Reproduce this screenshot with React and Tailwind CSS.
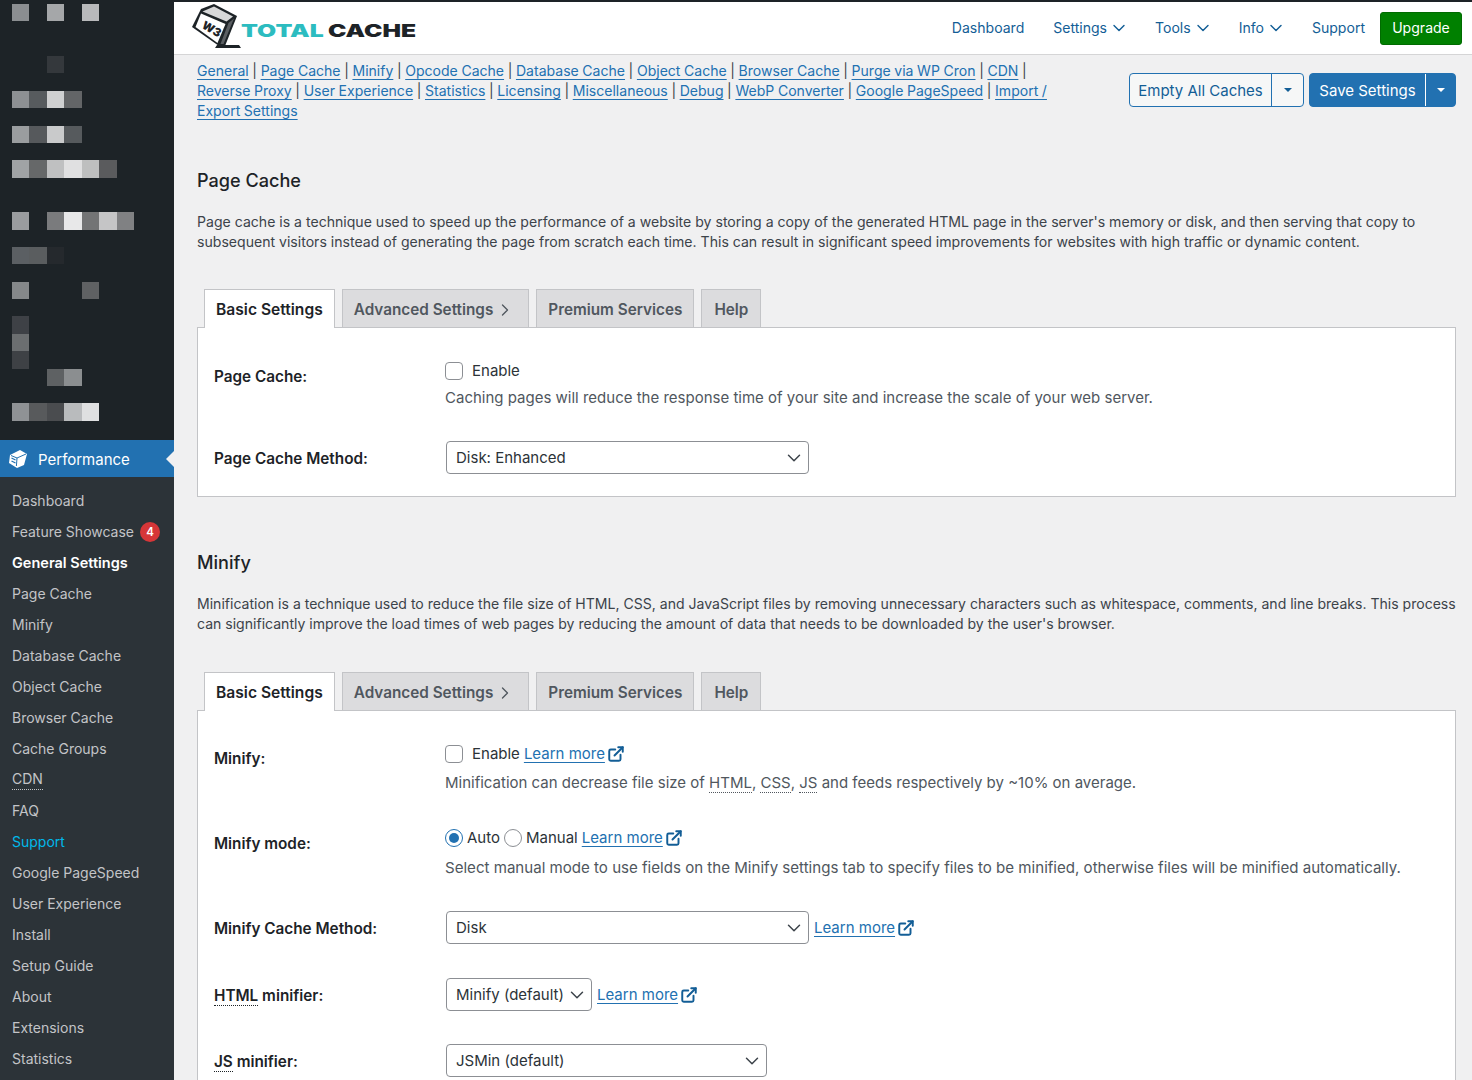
import React from "react";
import { ChevronDown, ChevronRight, ExternalLink } from "lucide-react";

const mosaic = [
  [0, [["#8b8e91", 0], ["#a5a7a9", 2], ["#b8b9bb", 4]]],
  [3, [["#34383c", 2]]],
  [5, [["#8d9093", 0], ["#575b5e", 1], ["#cfd0d1", 2], ["#636567", 3]]],
  [7, [["#9a9d9f", 0], ["#56595c", 1], ["#c9cacb", 2], ["#565a5d", 3]]],
  [9, [["#a0a3a5", 0], ["#666869", 1], ["#bfc0c1", 2], ["#e0e0e1", 3], ["#bebfbf", 4], ["#5a5b5d", 5]]],
  [12, [["#9a9c9f", 0], ["#7a7b7d", 2], ["#e8e8e9", 3], ["#737475", 4], ["#c5c5c6", 5], ["#808183", 6]]],
  [14, [["#5b5f63", 0], ["#5a5d5f", 1], ["#25292d", 2]]],
  [16, [["#85888a", 0], ["#5f6163", 4]]],
  [18, [["#3e4146", 0]]],
  [19, [["#6b6e70", 0]]],
  [20, [["#3e4145", 0]]],
  [21, [["#5e6163", 2], ["#8b8e90", 3]]],
  [23, [["#8f9295", 0], ["#585a5c", 1], ["#4a4c4f", 2], ["#b9bbbd", 3], ["#dfe0e1", 4]]],
];

const subItems = ["Dashboard", "Feature Showcase", "General Settings", "Page Cache", "Minify", "Database Cache", "Object Cache", "Browser Cache", "Cache Groups", "CDN", "FAQ", "Support", "Google PageSpeed", "User Experience", "Install", "Setup Guide", "About", "Extensions", "Statistics"];

const links = ["General", "Page Cache", "Minify", "Opcode Cache", "Database Cache", "Object Cache", "Browser Cache", "Purge via WP Cron", "CDN", "Reverse Proxy", "User Experience", "Statistics", "Licensing", "Miscellaneous", "Debug", "WebP Converter", "Google PageSpeed"];

function Link({ children }) {
  return <a className="text-[#2271b1] underline underline-offset-[3px] decoration-1">{children}</a>;
}

function Abbr({ children }) {
  return <span className="border-b border-dotted border-current">{children}</span>;
}

function Learn() {
  return (
    <span className="inline-flex items-center gap-[2px]">
      <Link>Learn more</Link>
      <ExternalLink size={18} strokeWidth={2.6} className="text-[#135e96]" />
    </span>
  );
}

function Select({ w, children }) {
  return (
    <div className={`${w} ml-[1px] h-[33px] flex items-center justify-between pl-[9px] pr-[3px] bg-white border border-[#8c8f94] rounded-[4px] text-[#2c3338] text-[15px] whitespace-nowrap`}>
      <span className="pt-[1px]">{children}</span>
      <ChevronDown size={22} strokeWidth={1.6} className="text-[#3c434a] shrink-0" />
    </div>
  );
}

function Check() {
  return <span className="inline-block w-[18px] h-[18px] rounded-[4px] border border-[#8c8f94] bg-white" />;
}

function Tabs() {
  const tab = "h-[38px] flex items-center pt-[2px] border border-b-0 border-[#c3c4c7] bg-[#dcdcde] text-[#50575e] font-semibold text-[15.3px]";
  return (
    <div className="flex pl-[7px] gap-[7px] h-[38px] relative z-10">
      <div className="h-[39px] flex items-center pt-[2px] px-[11px] border border-b-0 border-[#c3c4c7] bg-white text-[#1d2327] font-semibold text-[15.6px]">Basic Settings</div>
      <div className={`${tab} gap-[2px] pl-[11px] pr-[13px]`}>Advanced Settings <ChevronRight size={20} strokeWidth={1.6} /></div>
      <div className={`${tab} px-[11px]`}>Premium Services</div>
      <div className={`${tab} w-[60px] justify-center`}>Help</div>
    </div>
  );
}

function Row({ label, labelTop, top, children }) {
  return (
    <div className={`flex ${top}`}>
      <div className={`w-[231px] shrink-0 font-semibold text-[#1d2327] text-[15.3px] leading-5 ${labelTop}`}>{label}</div>
      <div className="flex-1 min-w-0">{children}</div>
    </div>
  );
}

function Logo() {
  return (
    <div className="flex items-center">
      <svg width="52" height="48" viewBox="0 0 52 48" className="shrink-0">
        <path d="M28 41 L50 41 L52 44 L26 44 Z" fill="#1d2327" />
        <path d="M12 5 L25 0 L48 12 L36 42 L30 42 L3 23 Z" fill="#1d2327" />
        <path d="M13.5 7.5 L25 2.5 L44 12.5 L37.5 17.5 Z" fill="#d7d8d9" />
        <path d="M12 9.5 L36.5 20 L28.5 39 L6.5 23 Z" fill="#ffffff" />
        <path d="M39.5 19 L45 14.5 L34.5 40 L31.5 40 Z" fill="#5a5e62" />
        <text x="13" y="28" fontSize="11.5" fontWeight="900" fontFamily="Inter, sans-serif" fill="#1d2327" transform="rotate(30 21 24)">W3</text>
      </svg>
      <div className="flex items-center mt-[6px] h-[20px] font-black text-[17.5px] leading-none" style={{ fontFamily: "Inter, sans-serif" }}>
        <span className="inline-block w-[87px] text-[#2cbcc0] origin-left scale-x-[1.41]">TOTAL</span>
        <span className="inline-block text-[#1d2327] origin-left scale-x-[1.41]">CACHE</span>
      </div>
    </div>
  );
}

function NavItem({ children, caret }) {
  return (
    <span className="flex items-center gap-[2px] text-[#135e96] text-[14.05px]">
      {children}
      {caret && <ChevronDown size={20} strokeWidth={1.7} className="-mr-[3px]" />}
    </span>
  );
}

export default function App() {
  return (
    <div className="flex h-[1080px] w-[1472px] overflow-hidden bg-[#f0f0f1] text-[14.05px] leading-5" style={{ fontFamily: "Inter, 'Liberation Sans', sans-serif" }}>
      <aside className="w-[174px] shrink-0 bg-[#1d2327] flex flex-col">
        <div className="h-[440px] shrink-0 pt-[4px] pl-[12px]">
          <div className="grid grid-cols-[repeat(7,17.43px)] grid-rows-[repeat(24,17.36px)]">
            {mosaic.flatMap(([r, cells]) => cells.map(([c, x]) => (
              <div key={`${r}-${x}`} style={{ gridRow: r + 1, gridColumn: x + 1, background: c }} />
            )))}
          </div>
        </div>
        <div className="h-[37px] shrink-0 bg-[#2271b1] flex items-center pl-[8px] relative text-white text-[15px]">
          <svg width="21" height="21" viewBox="0 0 21 21" className="mr-[9px]">
            <path d="M2 7 L12 2 L19 6 L16 17 L9 20 L1 15 Z" fill="#ffffff" />
            <path d="M3 7.5 L9 10 L8.4 18" stroke="#2271b1" strokeWidth="1" fill="none" />
            <path d="M9 10 L18 6" stroke="#2271b1" strokeWidth="1" fill="none" />
            <path d="M3.5 10 L7.5 12 M3.5 13 L7.5 15" stroke="#2271b1" strokeWidth="1.3" />
          </svg>
          <span className="pt-[3px]">Performance</span>
          <span className="absolute right-0 top-[11px] w-0 h-0 border-y-[8px] border-y-transparent border-r-[8px] border-r-[#f0f0f1]" />
        </div>
        <div className="flex-1 bg-[#2c3338] pt-[8px]">
          {subItems.map((s) => (
            <div key={s} className={`h-[31.05px] flex items-center pl-[12px] ${s === "General Settings" ? "text-white font-semibold text-[14.5px]" : s === "Support" ? "text-[#00b9eb] text-[14px]" : "text-[#c3c4c7] text-[14px]"}`}>
              {s === "CDN" ? <Abbr>CDN</Abbr> : s}
              {s === "Feature Showcase" && (
                <span className="ml-[6px] w-[20px] h-[20px] rounded-full bg-[#d63638] text-white text-[11.5px] font-semibold flex items-center justify-center">4</span>
              )}
            </div>
          ))}
        </div>
      </aside>

      <main className="flex-1 min-w-0 flex flex-col">
        <div className="h-[2px] bg-[#1d2327] shrink-0" />
        <header className="h-[53px] shrink-0 bg-white border-b border-[#d5d5d6] flex items-center justify-between pl-[15px] pr-[10px]">
          <Logo />
          <nav className="flex items-center">
            <div className="flex items-center gap-[29px] mr-[15px]">
              <NavItem>Dashboard</NavItem>
              <NavItem caret>Settings</NavItem>
              <NavItem caret>Tools</NavItem>
              <NavItem caret>Info</NavItem>
              <NavItem>Support</NavItem>
            </div>
            <span className="h-[33px] w-[82px] flex items-center justify-center rounded-[3px] bg-[#008000] border border-[#006b00] text-white text-[14.05px]">Upgrade</span>
          </nav>
        </header>

        <div className="px-[23px] pr-[16px]">
          <div className="flex justify-between items-start pt-[6px]">
            <div className="w-[852px] text-[#3c434a] [word-spacing:-0.35px]">
              {links.map((l) => <span key={l}><Link>{l}</Link>{" | "}</span>)}
              <Link>Import /</Link>{" "}
              <Link>Export Settings</Link>
            </div>
            <div className="flex gap-[5px] mt-[12px] text-[15px]">
              <div className="flex h-[34px] w-[175px] border border-[#2271b1] rounded-[4px] bg-[#f6f7f7] text-[#135e96]">
                <span className="flex-1 flex items-center justify-center pt-[1px]">Empty All Caches</span>
                <span className="w-[32px] border-l border-[#2271b1] flex items-center justify-center">
                  <span className="w-0 h-0 border-x-[4px] border-x-transparent border-t-[4px] border-t-[#135e96]" />
                </span>
              </div>
              <div className="flex h-[34px] w-[147px] border border-[#2271b1] rounded-[4px] bg-[#2271b1] text-white">
                <span className="flex-1 flex items-center justify-center pt-[1px]">Save Settings</span>
                <span className="w-[30px] border-l border-white flex items-center justify-center">
                  <span className="w-0 h-0 border-x-[4px] border-x-transparent border-t-[4px] border-t-white" />
                </span>
              </div>
            </div>
          </div>

          <h2 className="mt-[47px] text-[#1d2327] text-[18.1px] leading-6 font-medium">Page Cache</h2>
          <p className="mt-[20px] text-[#3c434a] text-[14.08px]">Page cache is a technique used to speed up the performance of a website by storing a copy of the generated HTML page in the server's memory or disk, and then serving that copy to subsequent visitors instead of generating the page from scratch each time. This can result in significant speed improvements for websites with high traffic or dynamic content.</p>

          <div className="mt-[37px]"><Tabs /></div>
          <section className="bg-white border border-[#c3c4c7] pl-[16px] pt-[33px] pb-[22px] text-[15px] text-[#50575e]">
            <Row label="Page Cache:" labelTop="mt-[6px]">
              <div className="flex items-center gap-[9px] text-[#2c3338]"><Check /> Enable</div>
              <p className="mt-[7px]">Caching pages will reduce the response time of your site and increase the scale of your web server.</p>
            </Row>
            <Row label="Page Cache Method:" labelTop="mt-[8px]" top="mt-[33px]">
              <Select w="w-[363px]">Disk: Enhanced</Select>
            </Row>
          </section>

          <h2 className="mt-[53px] text-[#1d2327] text-[18.1px] font-medium leading-6">Minify</h2>
          <p className="mt-[20px] text-[#3c434a]">Minification is a technique used to reduce the file size of HTML, CSS, and JavaScript files by removing unnecessary characters such as whitespace, comments, and line breaks. This process can significantly improve the load times of web pages by reducing the amount of data that needs to be downloaded by the user's browser.</p>

          <div className="mt-[38px]"><Tabs /></div>
          <section className="bg-white border border-[#c3c4c7] border-b-0 pl-[16px] pt-[33px] pb-[20px] text-[15px] text-[#50575e]">
            <Row label="Minify:" labelTop="mt-[5px]">
              <div className="flex items-center gap-[9px] text-[#2c3338]">
                <Check />
                <span className="flex items-center gap-1">Enable <Learn /></span>
              </div>
              <p className="mt-[9px]">Minification can decrease file size of <Abbr>HTML</Abbr>, <Abbr>CSS</Abbr>, <Abbr>JS</Abbr> and feeds respectively by ~10% on average.</p>
            </Row>
            <Row label="Minify mode:" labelTop="mt-[6px]" top="mt-[35px]">
              <div className="flex items-center gap-[4px] text-[#2c3338]">
                <span className="w-[18px] h-[18px] rounded-full border border-[#2271b1] bg-white flex items-center justify-center"><span className="w-[10px] h-[10px] rounded-full bg-[#2271b1]" /></span>
                Auto
                <span className="w-[18px] h-[18px] rounded-full border border-[#8c8f94] bg-white" />
                Manual
                <Learn />
              </div>
              <p className="mt-[10px] text-[15.08px]">Select manual mode to use fields on the Minify settings tab to specify files to be minified, otherwise files will be minified automatically.</p>
            </Row>
            <Row label="Minify Cache Method:" labelTop="mt-[8px]" top="mt-[33px]">
              <div className="flex items-center gap-[5px]"><Select w="w-[363px]">Disk</Select><Learn /></div>
            </Row>
            <Row label={<span><Abbr>HTML</Abbr> minifier:</span>} labelTop="mt-[8px]" top="mt-[34px]">
              <div className="flex items-center gap-[5px]"><Select w="w-[146px]">Minify (default)</Select><Learn /></div>
            </Row>
            <Row label={<span><Abbr>JS</Abbr> minifier:</span>} labelTop="mt-[8px]" top="mt-[33px]">
              <Select w="w-[321px]">JSMin (default)</Select>
            </Row>
          </section>
        </div>
      </main>
    </div>
  );
}
